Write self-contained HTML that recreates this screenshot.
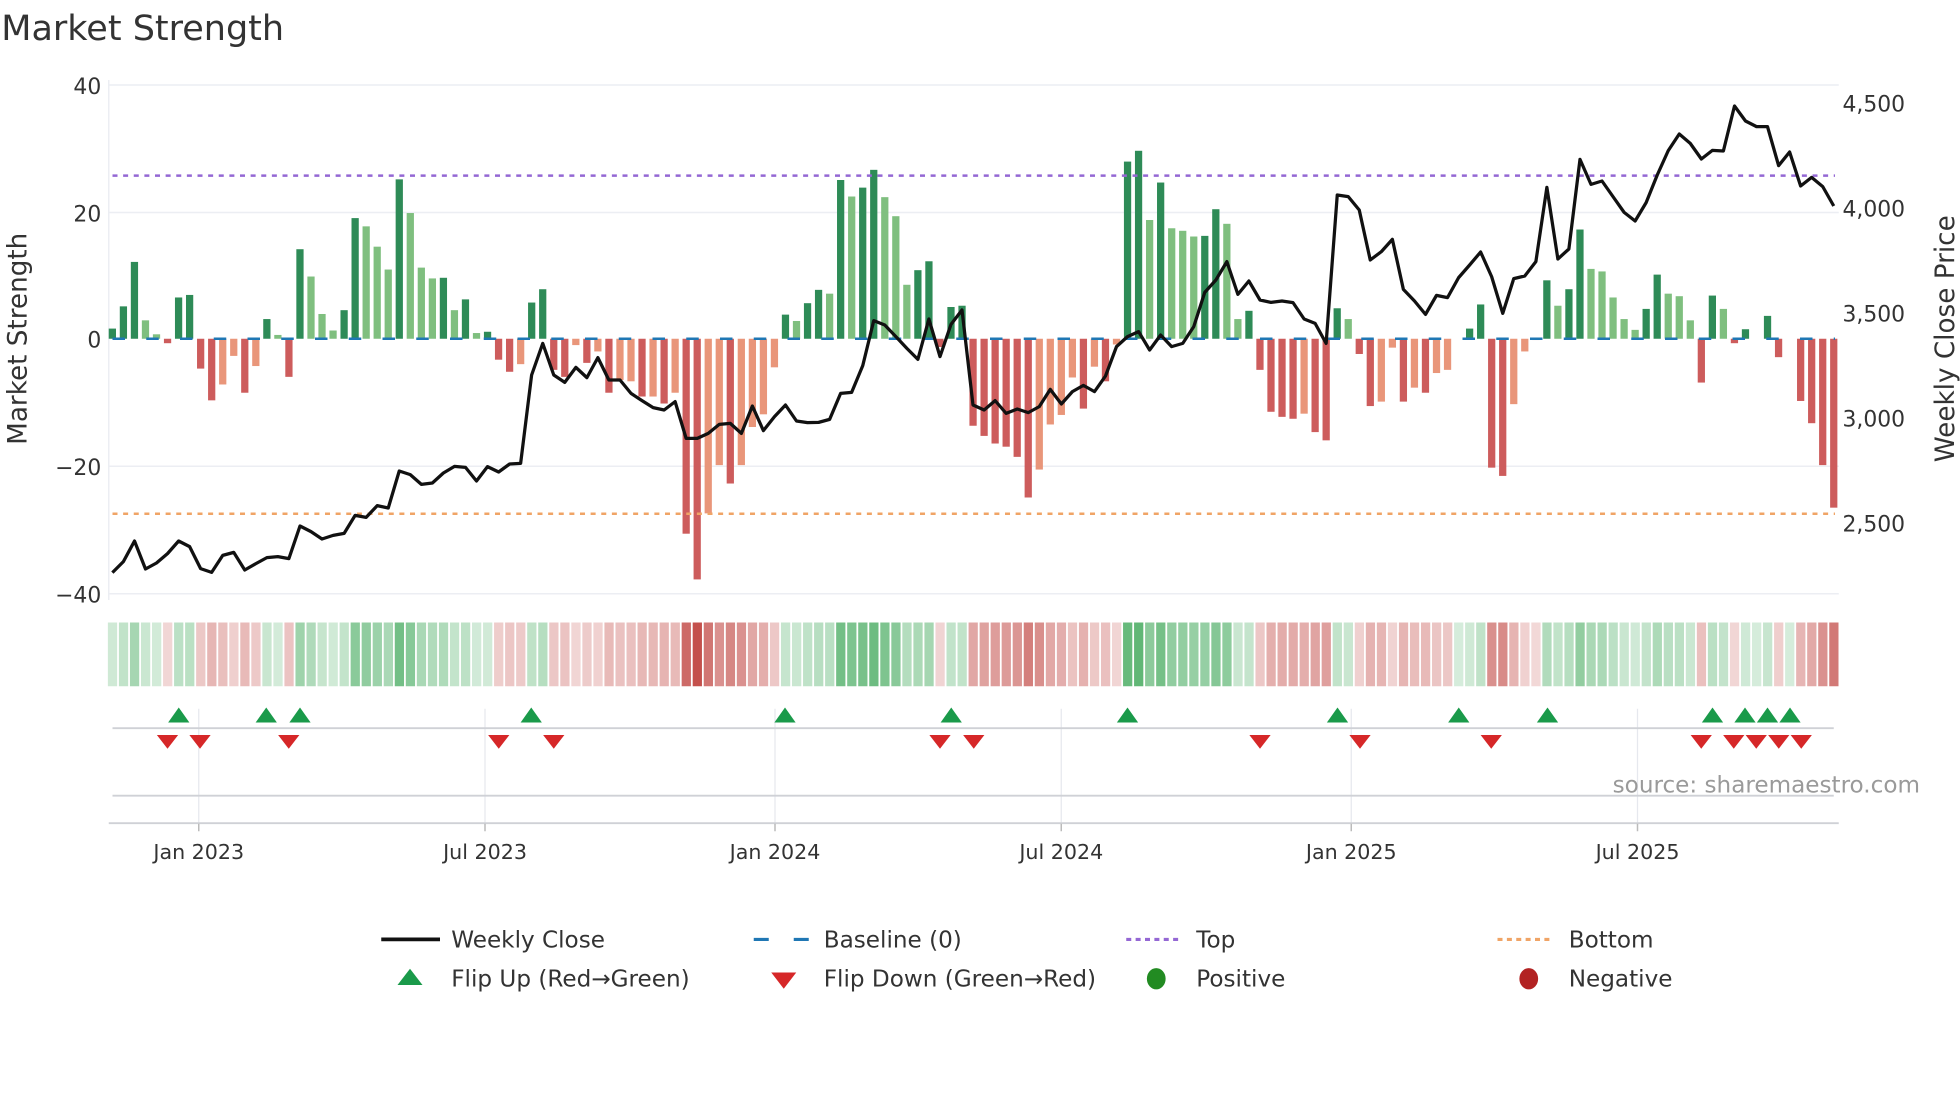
<!DOCTYPE html>
<html><head><meta charset="utf-8"><style>
html,body{margin:0;padding:0;background:#fff;}
svg{display:block;font-family:"DejaVu Sans","Liberation Sans",sans-serif;}
</style></head><body>
<svg id="c" width="1960" height="1102" viewBox="0 0 1568 881.6" xmlns="http://www.w3.org/2000/svg">
<text x="1" y="32" font-size="28" fill="#333">Market Strength</text>
<g id="grid" stroke="#eceef3" stroke-width="1.2">
<line x1="87" x2="1471" y1="68" y2="68"/><line x1="87" x2="1471" y1="170" y2="170"/><line x1="87" x2="1471" y1="373" y2="373"/><line x1="87" x2="1471" y1="475" y2="475"/>
<line x1="87" x2="87" y1="64" y2="480"/>
</g>
<g font-size="17.5" fill="#333" text-anchor="end">
<text x="81" y="75">40</text><text x="81" y="177">20</text><text x="81" y="278">0</text><text x="81" y="380">−20</text><text x="81" y="482">−40</text>
</g>
<g font-size="17.5" fill="#333">
<text x="1474" y="89">4,500</text><text x="1474" y="173">4,000</text><text x="1474" y="257">3,500</text><text x="1474" y="341">3,000</text><text x="1474" y="425">2,500</text>
</g>
<text transform="translate(21,271) rotate(-90)" font-size="21" fill="#333" text-anchor="middle">Market Strength</text>
<text transform="translate(1563,271) rotate(-90)" font-size="21" fill="#333" text-anchor="middle">Weekly Close Price</text>
<g id="bars"></g>
<line x1="90" x2="1468" y1="271" y2="271" stroke="#1f77b4" stroke-width="2" stroke-dasharray="10,17"/>
<line x1="90" x2="1468" y1="140.5" y2="140.5" stroke="#9467d4" stroke-width="2" stroke-dasharray="4,4.5"/>
<line x1="90" x2="1468" y1="411" y2="411" stroke="#f0a466" stroke-width="2" stroke-dasharray="4,4.5"/>
<polyline id="pl" fill="none" stroke="#111" stroke-width="2.6" stroke-linejoin="round"/>
<g id="strip"></g>
<g stroke="#e6e8ee" stroke-width="1">
<line x1="159" x2="159" y1="567" y2="660"/><line x1="388" x2="388" y1="567" y2="660"/><line x1="620" x2="620" y1="567" y2="660"/><line x1="849" x2="849" y1="567" y2="660"/><line x1="1081" x2="1081" y1="567" y2="660"/><line x1="1310" x2="1310" y1="567" y2="660"/>
</g>
<line x1="90" x2="1467" y1="582.5" y2="582.5" stroke="#cfd1d6" stroke-width="1.5"/>
<line x1="90" x2="1467" y1="636.5" y2="636.5" stroke="#cfd1d6" stroke-width="1.5"/>
<line x1="87" x2="1471" y1="658.5" y2="658.5" stroke="#cfd1d6" stroke-width="1.5"/>
<g id="mk"></g>
<g stroke="#bbb" stroke-width="1.2">
<line x1="159" x2="159" y1="659" y2="665"/><line x1="388" x2="388" y1="659" y2="665"/><line x1="620" x2="620" y1="659" y2="665"/><line x1="849" x2="849" y1="659" y2="665"/><line x1="1081" x2="1081" y1="659" y2="665"/><line x1="1310" x2="1310" y1="659" y2="665"/>
</g>
<g font-size="16.5" fill="#333" text-anchor="middle">
<text x="159" y="687">Jan 2023</text><text x="388" y="687">Jul 2023</text><text x="620" y="687">Jan 2024</text><text x="849" y="687">Jul 2024</text><text x="1081" y="687">Jan 2025</text><text x="1310" y="687">Jul 2025</text>
</g>
<text x="1536" y="634" font-size="18.5" fill="#9a9a9a" text-anchor="end">source: sharemaestro.com</text>
<g font-size="18.5" fill="#333">
<line x1="305" x2="352" y1="751.5" y2="751.5" stroke="#111" stroke-width="3"/>
<text x="361" y="758">Weekly Close</text>
<line x1="603" x2="647" y1="751.5" y2="751.5" stroke="#1f77b4" stroke-width="2.5" stroke-dasharray="12,20"/>
<text x="659" y="758">Baseline (0)</text>
<line x1="901" x2="945" y1="751.5" y2="751.5" stroke="#9467d4" stroke-width="2.5" stroke-dasharray="4,3.5"/>
<text x="957" y="758">Top</text>
<line x1="1198" x2="1243" y1="751.5" y2="751.5" stroke="#f0a466" stroke-width="2.5" stroke-dasharray="4,3.5"/>
<text x="1255" y="758">Bottom</text>
<polygon points="328,775 318,788 338,788" fill="#1a9a4a"/>
<text x="361" y="789">Flip Up (Red→Green)</text>
<polygon points="617,778 637,778 627,791" fill="#d62728"/>
<text x="659" y="789">Flip Down (Green→Red)</text>
<ellipse cx="925" cy="783" rx="7.5" ry="8.5" fill="#228b22"/>
<text x="957" y="789">Positive</text>
<ellipse cx="1223" cy="783" rx="7.5" ry="8.5" fill="#b22222"/>
<text x="1255" y="789">Negative</text>
</g>
</svg>
<script>
var V=[1.6,5.1,12.1,2.9,0.7,-0.7,6.5,6.9,-4.7,-9.7,-7.2,-2.7,-8.5,-4.3,3.1,0.6,-6,14.1,9.8,3.9,1.3,4.5,19,17.7,14.5,10.9,25.1,19.8,11.2,9.5,9.6,4.5,6.2,0.9,1.1,-3.3,-5.2,-4,5.7,7.8,
-4.9,-6,-1,-3.8,-2,-8.5,-6.5,-6.7,-9.1,-9.1,-10.2,-8.5,-30.7,-37.9,-27.5,-19.9,-22.8,-19.9,-13.9,-11.9,-4.5,3.8,2.8,5.6,7.7,7.1,25,22.4,23.8,26.6,22.3,19.3,8.5,10.8,12.2,-1.3,5,5.2,-13.7,-15.3,-16.5,
-17,-18.6,-25,-20.6,-13.5,-12,-6.1,-11,-4.4,-6.7,-0.9,27.9,29.6,18.7,24.6,17.4,17,16.1,16.2,20.4,18.1,3.1,4.4,-4.9,-11.5,-12.3,-12.6,-11.8,-14.7,-16,4.8,3.1,-2.4,-10.6,-9.9,-1.4,-9.9,-7.7,-8.5,
-5.4,-4.9,0,1.6,5.4,-20.3,-21.6,-10.3,-2,-0.2,9.2,5.2,7.8,17.2,11,10.6,6.5,3.1,1.4,4.7,10.1,7.1,6.7,2.9,-6.9,6.8,4.7,-0.7,1.5,0,3.6,-2.9,0,-9.8,-13.3,-19.9,-26.6];
var C="dddllrddrroorodlrdllldd"+"llldllldldldrrodd"+
"rrororooro"+"rorroorooo"+"odlddldldd"+"lllddrddrr"+"r"+
"rrrooooror"+"oddldllldd"+"lldrrrrorr"+"dlrrooror"+
"oonddrroor"+"dlddllllld"+"dlllrdlrdn"+"drnrrrr";
var L=[1478,1445,1383,1467,1449,1421,1383,1400,1466,1477,1426,1417,1470,1451,1433,1430,1436,1338,1355,1377,1366,1360,1306,1312,1277,1284,1173,1184,1213,1209,1179,1159,1162,1203,1160,1176,1152,1150,885,790,
885,907,862,893,833,900,900,940,962,983,990,965,1075,1075,1060,1033,1030,1060,978,1052,1010,975,1023,1028,1027,1018,940,937,857,722,735,770,805,838,717,830,733,690,975,990,962,
1000,987,998,980,928,972,935,916,935,888,800,770,755,810,765,800,790,740,637,600,545,643,603,660,667,663,668,717,730,790,345,350,390,540,515,478,628,663,703,
646,653,593,555,516,590,700,596,588,545,322,537,507,238,313,303,350,397,423,368,285,212,162,190,237,211,213,78,123,140,140,257,216,318,292,320,378];
var NS="http://www.w3.org/2000/svg";
function el(t,a,p){var e=document.createElementNS(NS,t);for(var k in a)e.setAttribute(k,a[k]);p.appendChild(e);return e;}
var bars=document.getElementById("bars"),strip=document.getElementById("strip"),mk=document.getElementById("mk");
var n=V.length,step=(1467-89.9)/(n-1);
var col={d:"#2e8b57",l:"#7fbf7f",r:"#cd5c5c",o:"#e9967a",n:"#cd5c5c"};
function mix(c,t){return "rgb("+Math.round(255+(c[0]-255)*t)+","+Math.round(255+(c[1]-255)*t)+","+Math.round(255+(c[2]-255)*t)+")";}
var pts=[];
for(var i=0;i<n;i++){
 var x=89.9+step*i,v=V[i];
 var h=Math.abs(v)*5.08;
 var c=C[i]||"d";
 if(v>0&&(c=="r"||c=="o"||c=="n"))c="d";
 if(v<0&&(c=="d"||c=="l"))c="r";
 if(h>0.3){
  var y=v>0?271-h:271;
  el("rect",{x:(x-2.9).toFixed(2),y:y.toFixed(2),width:5.8,height:h.toFixed(2),fill:col[c]},bars);
 }
 pts.push(x.toFixed(1)+","+(64+L[i]/3.75).toFixed(1));
 var t=0.22+0.78*Math.min(Math.abs(v),38)/38;
 var f=v>=0?mix([64,168,90],t):mix([196,80,76],t);
 el("rect",{x:(x-3.6).toFixed(2),y:498,width:7.4,height:51,fill:f},strip);
}
document.getElementById("pl").setAttribute("points",pts.join(" "));
var up=[143,213,240,425,628,761,902,1070,1167,1238,1370,1396,1414,1432];
var dn=[134,160,231,399,443,752,779,1008,1088,1193,1361,1387,1405,1423,1441];
up.forEach(function(x){el("polygon",{points:x+",566 "+(x-8.5)+",578 "+(x+8.5)+",578",fill:"#1a9a4a"},mk);});
dn.forEach(function(x){el("polygon",{points:(x-8.5)+",588 "+(x+8.5)+",588 "+x+",599",fill:"#d62728"},mk);});
</script>
</body></html>
